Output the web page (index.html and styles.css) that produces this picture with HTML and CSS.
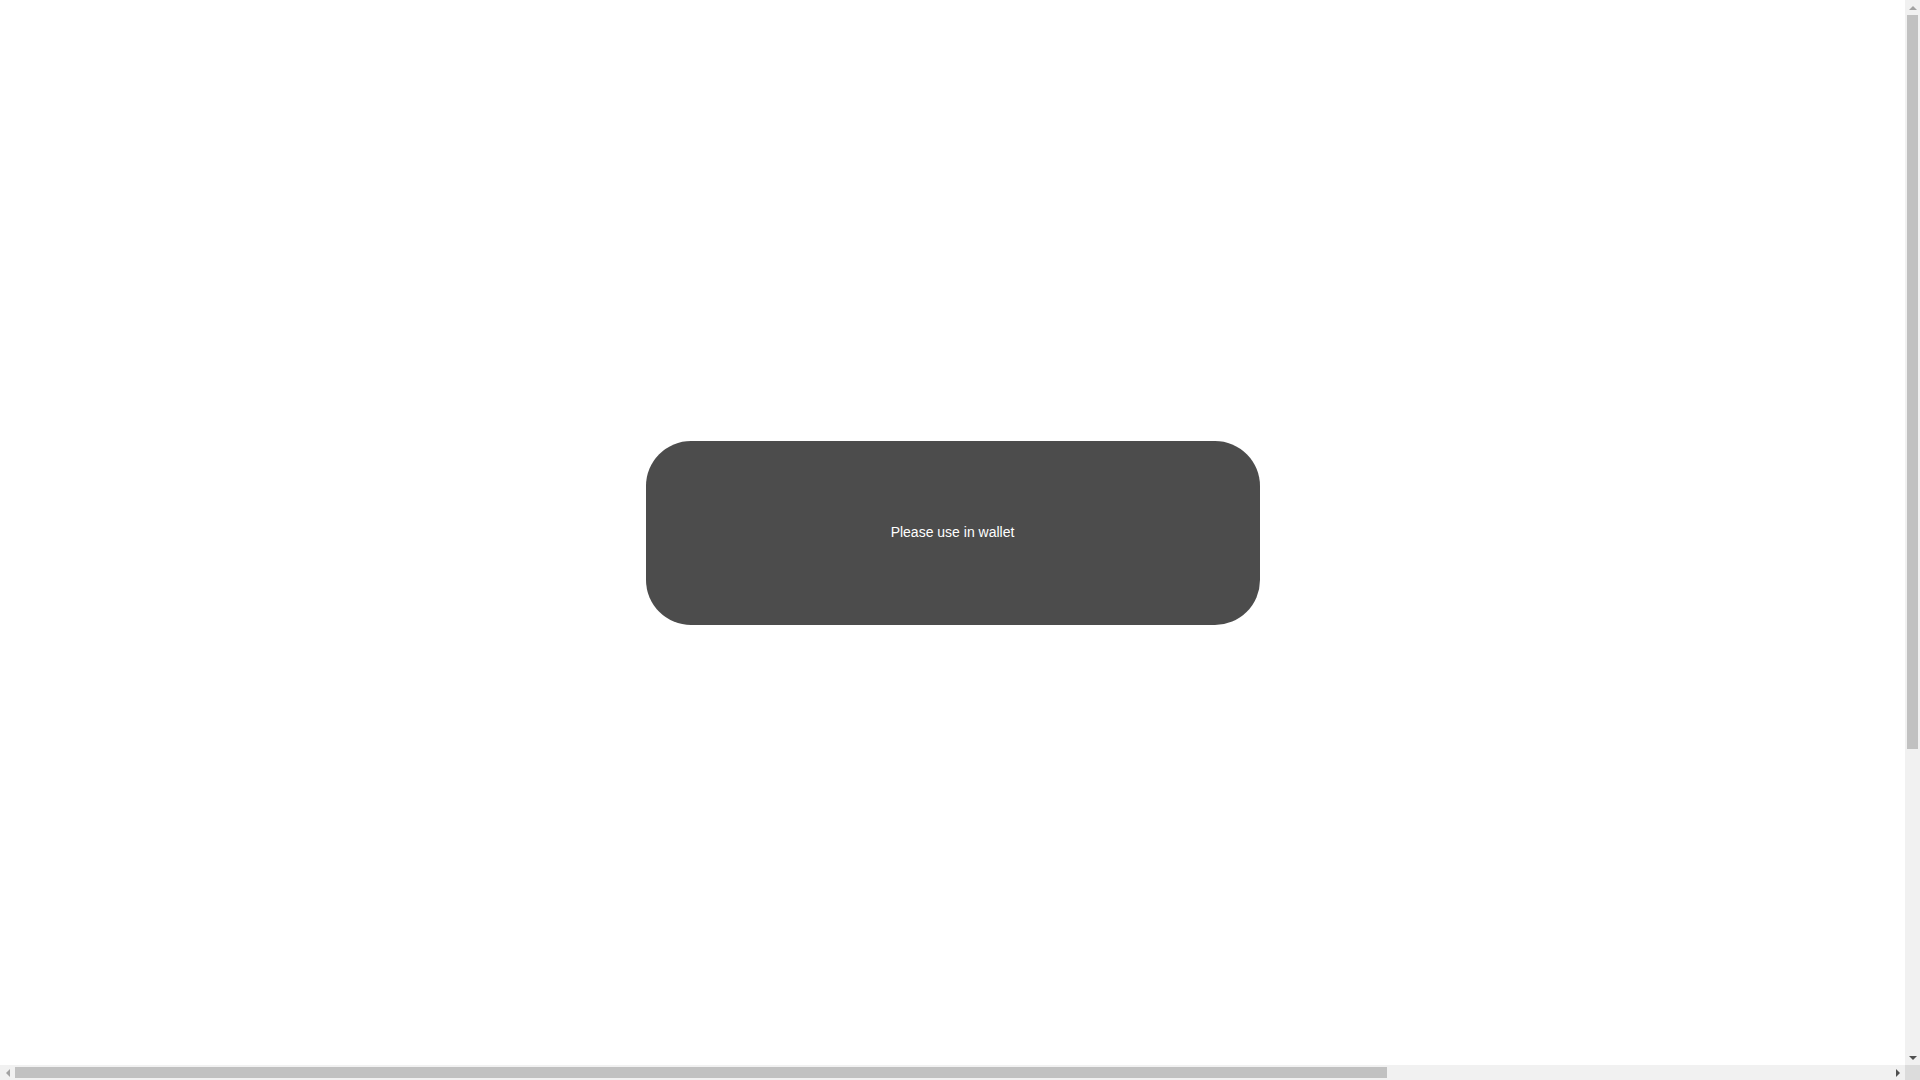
FILE: index.html
```html
<!DOCTYPE html>
<html lang="en">
<head>
<meta charset="utf-8">
<title>Wallet</title>
<link rel="stylesheet" href="styles.css">
</head>
<body>
<div class="frame">
  <main class="viewport">
    <div class="toast">
      <span class="toast-text">Please use in wallet</span>
    </div>
  </main>
  <div class="vbar">
    <div class="arrow arrow-up"></div>
    <div class="vtrack"><div class="vthumb"></div></div>
    <div class="arrow arrow-down"></div>
  </div>
  <div class="hbar">
    <div class="arrow arrow-left"></div>
    <div class="htrack"><div class="hthumb"></div></div>
    <div class="arrow arrow-right"></div>
  </div>
  <div class="corner"></div>
</div>
</body>
</html>
```
FILE: styles.css
```css
html, body {
  margin: 0;
  padding: 0;
  height: 100%;
  overflow: hidden;
  background: #ffffff;
  font-family: "Liberation Sans", Arial, sans-serif;
}
.frame {
  width: 100vw;
  height: 100vh;
  display: grid;
  grid-template-columns: 1fr 15px;
  grid-template-rows: 1fr 15px;
}
.viewport {
  display: flex;
  align-items: center;
  justify-content: center;
  background: #ffffff;
}
.toast {
  box-sizing: border-box;
  width: 614px;
  height: 184px;
  padding-bottom: 2px;
  border-radius: 45px;
  background: rgba(0, 0, 0, 0.7);
  display: flex;
  align-items: center;
  justify-content: center;
}
.toast-text {
  color: #ffffff;
  font-size: 14px;
  line-height: 18px;
}
.vbar {
  background: #f1f1f1;
  display: flex;
  flex-direction: column;
}
.hbar {
  background: #f1f1f1;
  display: flex;
  flex-direction: row;
}
.corner {
  background: #dcdcdc;
}
.arrow {
  width: 15px;
  height: 15px;
  flex: none;
  display: flex;
  align-items: center;
  justify-content: center;
}
.arrow::before {
  content: "";
  width: 0;
  height: 0;
  border-style: solid;
}
.arrow-up::before {
  border-width: 0 4px 4px 4px;
  border-color: transparent transparent #a3a3a3 transparent;
}
.arrow-down::before {
  border-width: 4px 4px 0 4px;
  border-color: #505050 transparent transparent transparent;
}
.arrow-left::before {
  border-width: 4px 4px 4px 0;
  border-color: transparent #a3a3a3 transparent transparent;
}
.arrow-right::before {
  border-width: 4px 0 4px 4px;
  border-color: transparent transparent transparent #505050;
}
.vtrack {
  flex: 1;
  padding: 0 2px;
}
.vthumb {
  height: 734px;
  background: #c1c1c1;
}
.htrack {
  flex: 1;
  padding: 2px 0;
}
.hthumb {
  width: 1372px;
  height: 100%;
  background: #c1c1c1;
}
```
